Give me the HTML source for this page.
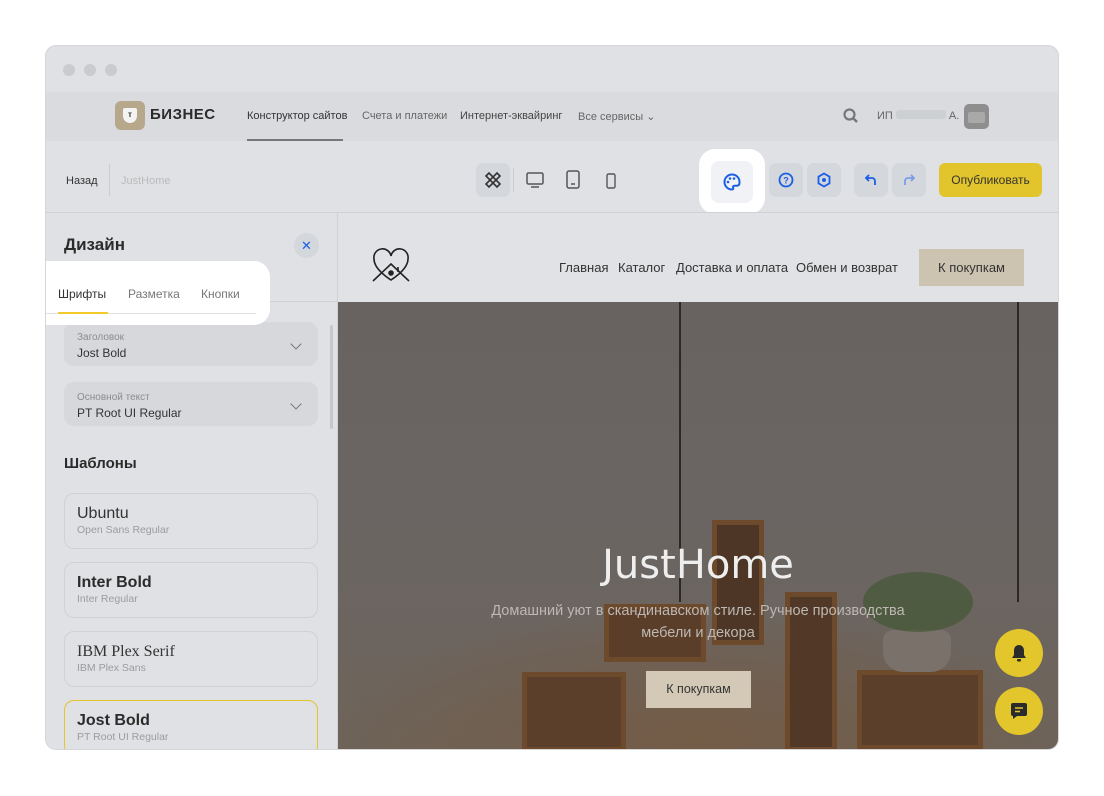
<!DOCTYPE html>
<html><head><meta charset="utf-8"><style>
*{margin:0;padding:0;box-sizing:border-box}
body{width:1104px;height:796px;background:#fff;font-family:"Liberation Sans",sans-serif;position:relative;overflow:hidden;color:#333}
.a{position:absolute}
.win{left:46px;top:46px;width:1012px;height:703px;border-radius:10px;overflow:hidden;background:#e0e1e4;box-shadow:0 0 0 1px #d4d6d9}
.dot{width:12px;height:12px;border-radius:50%;background:#c9cbce;top:18px}
.ib{width:34px;height:34px;border-radius:7px;background:#d4d7db;top:117px;display:flex;align-items:center;justify-content:center}
.card{left:18px;width:254px;height:56px;border:1px solid #cfd1d4;border-radius:10px;padding:11px 12px}
.card b,.card span{display:block}
.card span{font-size:10.5px;color:#9a9c9f;margin-top:1px}
.dd{left:18px;width:254px;height:44px;border-radius:10px;background:#d6d8dc;padding:10px 13px}
.dd small{display:block;font-size:10px;color:#8a8c90}
.dd div{font-size:12px;color:#333;margin-top:3px}
.chev{right:18px;top:15px;width:8px;height:8px;border-right:1.5px solid #777;border-bottom:1.5px solid #777;transform:rotate(45deg)}
.nv{top:47px;font-size:13px;color:#333}
</style></head><body>
<div class="a win">
  <div class="a dot" style="left:17px"></div><div class="a dot" style="left:38px"></div><div class="a dot" style="left:59px"></div>
  <div class="a" style="left:0;top:46px;width:1012px;height:49px;background:#d9dbde"></div>
  <div class="a" style="left:69px;top:55px;width:30px;height:29px;border-radius:6px;background:#b7a88c"></div>
  <div class="a" style="left:77px;top:62px;width:14px;height:15px;background:#f3f3f3;border-radius:2px 2px 7px 7px;font-size:8px;font-weight:bold;text-align:center;line-height:13px;color:#333">т</div>
  <div class="a" style="left:104px;top:60px;font-size:15px;font-weight:bold;color:#2b2b2b;letter-spacing:.5px">БИЗНЕС</div>
  <div class="a" style="left:201px;top:64px;font-size:11px;color:#333">Конструктор сайтов</div>
  <div class="a" style="left:201px;top:93px;width:96px;height:2px;background:#777"></div>
  <div class="a" style="left:316px;top:64px;font-size:11px;color:#666">Счета и платежи</div>
  <div class="a" style="left:414px;top:64px;font-size:11px;color:#444">Интернет-эквайринг</div>
  <div class="a" style="left:532px;top:64px;font-size:11px;color:#666">Все сервисы ⌄</div>
  <svg class="a" style="left:797px;top:62px" width="16" height="16"><circle cx="6.5" cy="6.5" r="5" fill="none" stroke="#777" stroke-width="2.2"/><path d="M10 10l4 4" stroke="#777" stroke-width="2.5"/></svg>
  <div class="a" style="left:831px;top:64px;font-size:11px;color:#666">ИП <span style="display:inline-block;width:50px;height:9px;background:#cdd0d3;border-radius:3px"></span> А.</div>
  <div class="a" style="left:918px;top:58px;width:25px;height:25px;border-radius:5px;background:#8e8e8e"><div style="margin:8px 4px;height:11px;background:#a9a9a9;border-radius:2px"></div></div>
  <div class="a" style="left:20px;top:129px;font-size:11px;color:#333">Назад</div>
  <div class="a" style="left:63px;top:118px;width:1px;height:32px;background:#ccc"></div>
  <div class="a" style="left:75px;top:129px;font-size:11px;color:#bbb">JustHome</div>
  <div class="a ib" style="left:430px"><svg width="20" height="20" viewBox="0 0 20 20" fill="none" stroke="#333" stroke-width="1.6"><path d="M3 6l3-3 11 11-3 3zM14 3l3 3-11 11-3-3z"/></svg></div>
  <div class="a" style="left:467px;top:122px;width:1px;height:24px;background:#ccc"></div>
  <svg class="a" style="left:480px;top:125px" width="18" height="18" fill="none" stroke="#555" stroke-width="1.5"><rect x="1" y="2" width="16" height="11" rx="1.5"/><path d="M5 16h8"/></svg>
  <svg class="a" style="left:520px;top:124px" width="14" height="20" fill="none" stroke="#555" stroke-width="1.5"><rect x="1" y="1" width="12" height="17" rx="2"/><path d="M5 14h4"/></svg>
  <svg class="a" style="left:560px;top:127px" width="10" height="16" fill="none" stroke="#555" stroke-width="1.4"><rect x="1" y="1" width="8" height="14" rx="1.5"/></svg>
  <div class="a" style="left:653px;top:103px;width:66px;height:65px;border-radius:16px;background:#fff"></div>
  <div class="a" style="left:665px;top:115px;width:42px;height:42px;border-radius:8px;background:#f1f2f5;display:flex;align-items:center;justify-content:center"><svg width="18" height="18" viewBox="0 0 18 18"><path d="M9 1.5a7.5 7.5 0 1 0 0 15c1.2 0 1.6-.8 1.2-1.6-.5-1-.2-2.2 1.2-2.2H14c1.8 0 2.5-1.3 2.5-3.2A7.5 7.5 0 0 0 9 1.5z" fill="none" stroke="#1a5fe6" stroke-width="2"/><circle cx="5" cy="9" r="1.3" fill="#1a5fe6"/><circle cx="7" cy="5.5" r="1.3" fill="#1a5fe6"/><circle cx="11" cy="5.5" r="1.3" fill="#1a5fe6"/></svg></div>
  <div class="a ib" style="left:723px"><svg width="16" height="16"><circle cx="8" cy="8" r="6.5" fill="none" stroke="#1a5fe6" stroke-width="1.8"/><text x="8" y="11.5" font-size="9" font-weight="bold" text-anchor="middle" fill="#1a5fe6" font-family="Liberation Sans">?</text></svg></div>
  <div class="a ib" style="left:761px"><svg width="16" height="16"><path d="M8 1.5l5.5 3.2v6.6L8 14.5l-5.5-3.2V4.7z" fill="none" stroke="#1a5fe6" stroke-width="1.8"/><circle cx="8" cy="8" r="2" fill="#1a5fe6"/></svg></div>
  <div class="a ib" style="left:808px"><svg width="14" height="14" fill="none" stroke="#1a5fe6" stroke-width="1.8"><path d="M5 2L2 5l3 3M2 5h6a3 3 0 0 1 3 3v4"/></svg></div>
  <div class="a ib" style="left:846px"><svg width="14" height="14" fill="none" stroke="#7a9ee6" stroke-width="1.8"><path d="M9 2l3 3-3 3M12 5H6a3 3 0 0 0-3 3v4"/></svg></div>
  <div class="a" style="left:893px;top:117px;width:103px;height:34px;border-radius:6px;background:#e2c42c;font-size:12px;color:#333;text-align:center;line-height:34px">Опубликовать</div>
  <div class="a" style="left:0;top:166px;width:1012px;height:1px;background:#cfd1d4"></div>
  <div class="a" style="left:0;top:167px;width:292px;height:536px;overflow:hidden">
    <div class="a" style="left:18px;top:22px;font-size:17px;font-weight:bold;color:#2b2b2b">Дизайн</div>
    <div class="a" style="left:248px;top:20px;width:25px;height:25px;border-radius:50%;background:#d4d7db;color:#1a5fe6;text-align:center;line-height:25px;font-size:13px">✕</div>
    <div class="a" style="left:0;top:88px;width:292px;height:1px;background:#cfd1d4"></div>
    <div class="a dd" style="top:109px"><small>Заголовок</small><div>Jost Bold</div><div class="a chev"></div></div>
    <div class="a dd" style="top:169px"><small>Основной текст</small><div>PT Root UI Regular</div><div class="a chev"></div></div>
    <div class="a" style="left:284px;top:112px;width:3px;height:104px;border-radius:2px;background:#c5c7ca"></div>
    <div class="a" style="left:18px;top:242px;font-size:15px;font-weight:bold;color:#2b2b2b">Шаблоны</div>
    <div class="a card" style="top:280px"><b style="font-size:16px;font-weight:normal;color:#333">Ubuntu</b><span>Open Sans Regular</span></div>
    <div class="a card" style="top:349px"><b style="font-size:16px;color:#2b2b2b">Inter Bold</b><span>Inter Regular</span></div>
    <div class="a card" style="top:418px"><b style="font-size:16px;font-weight:normal;font-family:'Liberation Serif',serif;color:#333">IBM Plex Serif</b><span>IBM Plex Sans</span></div>
    <div class="a card" style="top:487px;border:1.5px solid #e2c42c"><b style="font-size:16px;color:#2b2b2b">Jost Bold</b><span>PT Root UI Regular</span></div>
  </div>
  <div class="a" style="left:0;top:215px;width:224px;height:64px;background:#fff;border-radius:0 16px 16px 0"></div>
  <div class="a" style="left:12px;top:241px;font-size:12px;color:#333">Шрифты</div>
  <div class="a" style="left:82px;top:241px;font-size:12px;color:#777">Разметка</div>
  <div class="a" style="left:155px;top:241px;font-size:12px;color:#777">Кнопки</div>
  <div class="a" style="left:0;top:267px;width:210px;height:1px;background:#e3e3e3"></div>
  <div class="a" style="left:12px;top:266px;width:50px;height:2px;background:#f2cb2a"></div>
  <div class="a" style="left:291px;top:167px;width:1px;height:536px;background:#cfd1d4"></div>
  <div class="a" style="left:292px;top:167px;width:720px;height:89px;background:#e1e2e5">
    <svg class="a" style="left:33px;top:35px" width="40" height="40" viewBox="0 0 40 40" fill="none" stroke="#222" stroke-width="1.6"><path d="M20 32C8 24 3 17 3 11a8 8 0 0 1 17-3 8 8 0 0 1 17 3c0 6-5 13-17 21z"/><path d="M2 33L20 16l18 17M27 19v5"/><circle cx="20" cy="25" r="2" fill="#222"/></svg>
    <div class="a nv" style="left:221px">Главная</div>
    <div class="a nv" style="left:280px">Каталог</div>
    <div class="a nv" style="left:338px">Доставка и оплата</div>
    <div class="a nv" style="left:458px">Обмен и возврат</div>
    <div class="a" style="left:581px;top:36px;width:105px;height:37px;background:#cdc3b1;font-size:13px;color:#333;text-align:center;line-height:37px">К покупкам</div>
  </div>
  <div class="a" style="left:292px;top:256px;width:720px;height:447px;overflow:hidden;background:linear-gradient(#686361,#6b6562 60%,#6e6358)">
    <div class="a" style="left:0;top:300px;width:720px;height:150px;background:radial-gradient(ellipse at 50% 90%,rgba(120,85,55,.55),transparent 70%)"></div>
    <div class="a" style="left:341px;top:0;width:2px;height:300px;background:#2c2824"></div>
    <div class="a" style="left:679px;top:0;width:2px;height:300px;background:#2c2824"></div>
    <div class="a" style="left:374px;top:218px;width:52px;height:125px;border:5px solid #6e4a2c;background:#4d3626"></div>
    <div class="a" style="left:266px;top:302px;width:102px;height:58px;border:5px solid #6e4a2c;background:#5a3e29"></div>
    <div class="a" style="left:447px;top:290px;width:52px;height:160px;border:5px solid #6e4a2c;background:#523826"></div>
    <div class="a" style="left:184px;top:370px;width:104px;height:80px;border:5px solid #6e4a2c;background:#5b3f2a"></div>
    <div class="a" style="left:519px;top:368px;width:126px;height:80px;border:5px solid #6e4a2c;background:#5b3f2a"></div>
    <div class="a" style="left:545px;top:328px;width:68px;height:42px;border-radius:10px 10px 20px 20px;background:#7a716a"></div>
    <div class="a" style="left:525px;top:270px;width:110px;height:60px;border-radius:50%;background:rgba(60,85,45,.6)"></div>
    <div class="a" style="left:0;top:240px;width:720px;text-align:center;font-size:40px;color:#eee;font-family:'DejaVu Sans',sans-serif">JustHome</div>
    <div class="a" style="left:130px;top:298px;width:460px;text-align:center;font-size:14.5px;line-height:22px;color:#bdb8b3">Домашний уют в скандинавском стиле. Ручное производства<br>мебели и декора</div>
    <div class="a" style="left:308px;top:369px;width:105px;height:37px;background:#d4c9b6;font-size:12.5px;color:#333;text-align:center;line-height:37px">К покупкам</div>
    <div class="a" style="left:657px;top:327px;width:48px;height:48px;border-radius:50%;background:#e3c62b;display:flex;align-items:center;justify-content:center"><svg width="18" height="20"><path d="M9 2c-3 0-5 2.5-5 5.5V12l-2 3h14l-2-3V7.5C14 4.5 12 2 9 2z" fill="#2b2b2b"/><rect x="7" y="16" width="4" height="2.5" rx="1" fill="#2b2b2b"/></svg></div>
    <div class="a" style="left:657px;top:385px;width:48px;height:48px;border-radius:50%;background:#e3c62b;display:flex;align-items:center;justify-content:center"><svg width="20" height="18"><path d="M2 3a2 2 0 0 1 2-2h12a2 2 0 0 1 2 2v9a2 2 0 0 1-2 2H8l-4 3v-3a2 2 0 0 1-2-2z" fill="#2b2b2b"/><path d="M6 6h8M6 9.5h5" stroke="#e3c62b" stroke-width="1.6"/></svg></div>
  </div>
</div>
</body></html>
